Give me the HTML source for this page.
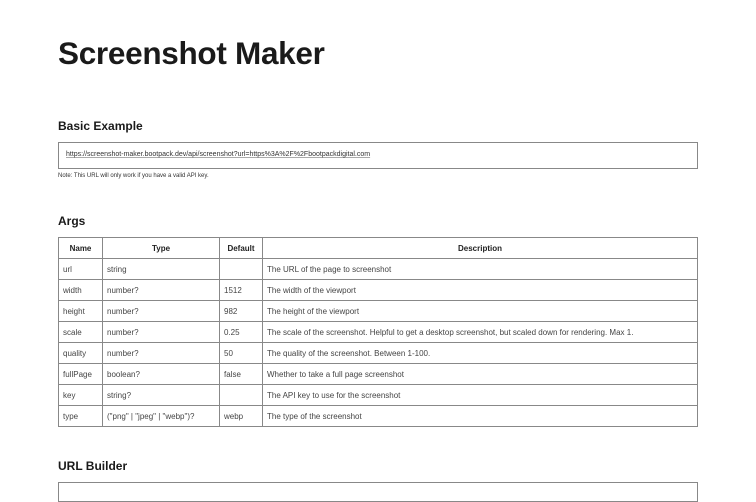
<!DOCTYPE html><html><head><style>
*{margin:0;padding:0;box-sizing:border-box}
body{width:756px;height:491px;overflow:hidden;background:#fff;font-family:"Liberation Sans",sans-serif;color:#222;position:relative}
.a{position:absolute}
h1{position:absolute;left:58px;top:35px;font-size:31.5px;font-weight:bold;letter-spacing:-0.3px;color:#1a1a1a}
h2{position:absolute;left:58px;font-size:12px;font-weight:bold;color:#1a1a1a}
.box{position:absolute;left:58px;width:640px;border:1px solid #888}
table{position:absolute;left:58px;top:237px;width:640px;border-collapse:collapse;font-size:8px;color:#444}
tr{height:21px}
td,th{border:1px solid #888;padding:0 4px;text-align:left;font-weight:normal}
th{text-align:center;font-weight:bold;color:#222}
</style></head><body>
<h1>Screenshot Maker</h1>
<h2 style="top:119px">Basic Example</h2>
<div class="box" style="top:142px;height:27px"><span class="a" style="left:7px;top:8px;font-size:7px;color:#333;text-decoration:underline;text-decoration-color:#aaa">https://screenshot-maker.bootpack.dev/api/screenshot?url=https%3A%2F%2Fbootpackdigital.com</span></div>
<div class="a" style="left:58px;top:173px;font-size:6px;color:#333">Note: This URL will only work if you have a valid API key.</div>
<h2 style="top:214px">Args</h2>
<table>
<colgroup><col style="width:44px"><col style="width:117px"><col style="width:43px"><col></colgroup>
<tr><th>Name</th><th>Type</th><th>Default</th><th>Description</th></tr>
<tr><td>url</td><td>string</td><td></td><td>The URL of the page to screenshot</td></tr>
<tr><td>width</td><td>number?</td><td>1512</td><td>The width of the viewport</td></tr>
<tr><td>height</td><td>number?</td><td>982</td><td>The height of the viewport</td></tr>
<tr><td>scale</td><td>number?</td><td>0.25</td><td>The scale of the screenshot. Helpful to get a desktop screenshot, but scaled down for rendering. Max 1.</td></tr>
<tr><td>quality</td><td>number?</td><td>50</td><td>The quality of the screenshot. Between 1-100.</td></tr>
<tr><td>fullPage</td><td>boolean?</td><td>false</td><td>Whether to take a full page screenshot</td></tr>
<tr><td>key</td><td>string?</td><td></td><td>The API key to use for the screenshot</td></tr>
<tr><td>type</td><td>("png" | "jpeg" | "webp")?</td><td>webp</td><td>The type of the screenshot</td></tr>
</table>
<h2 style="top:459px">URL Builder</h2>
<div class="box" style="top:482px;height:20px"></div>
</body></html>
